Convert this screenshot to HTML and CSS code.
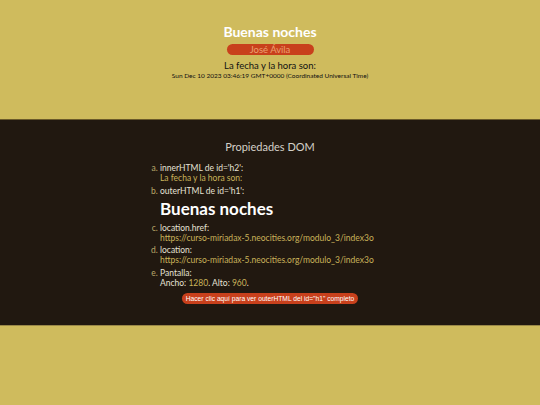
FILE: index.html
```html
<!DOCTYPE html>
<html lang="es">
<head>
<meta charset="utf-8">
<title>Propiedades DOM</title>
<link rel="stylesheet" href="styles.css">
</head>
<body>
<header class="top">
  <h1 class="title">Buenas noches</h1>
  <div class="name">José Ávila</div>
  <h2 class="when">La fecha y la hora son:</h2>
  <div class="date">Sun Dec 10 2023 03:46:19 GMT+0000 (Coordinated Universal Time)</div>
</header>
<section class="panel">
  <h3 class="panel-title">Propiedades DOM</h3>
  <ol class="props">
    <li><span class="key">innerHTML de id='h2':</span><span class="val">La fecha y la hora son:</span></li>
    <li><span class="key">outerHTML de id='h1':</span><span class="big">Buenas noches</span></li>
    <li><span class="key">location.href:</span><span class="val">https://curso-miriadax-5.neocities.org/modulo_3/index3o</span></li>
    <li><span class="key">location:</span><span class="val">https://curso-miriadax-5.neocities.org/modulo_3/index3o</span></li>
    <li><span class="key">Pantalla:</span><span class="plain">Ancho: <span class="num">1280</span>. Alto: <span class="num">960</span>.</span></li>
  </ol>
  <div class="actions"><button class="btn">Hacer clic aquí para ver outerHTML del id="h1" completo</button></div>
</section>
</body>
</html>
```
FILE: styles.css
```css
html, body {
  margin: 0;
  padding: 0;
  background: #cfbb5d;
  font-family: Lato, "Noto Sans", sans-serif;
}
.top {
  display: flex;
  flex-direction: column;
  align-items: center;
  padding-top: 22px;
  height: 97px;
  box-sizing: content-box;
}
.title {
  margin: 0;
  font-size: 14px;
  line-height: 19px;
  color: #fff;
  font-weight: 700;
}
.name {
  margin-top: 3px;
  width: 87px;
  height: 11px;
  line-height: 11px;
  border-radius: 6px;
  background: #c8401c;
  color: #eba070;
  font-size: 9.5px;
  text-align: center;
}
.when {
  margin: 6px 0 0;
  font-size: 9.5px;
  line-height: 10px;
  font-weight: 400;
  color: #111;
}
.date {
  margin-top: 1px;
  font-size: 6.5px;
  line-height: 7px;
  color: #111;
}
.panel {
  background: #211810;
  border-top: 1px solid #6b5a2a;
  border-bottom: 1px solid #9a8848;
  height: 207px;
  box-sizing: border-box;
  padding-top: 20px;
}
.panel-title {
  margin: 0;
  text-align: center;
  font-size: 11px;
  line-height: 14px;
  font-weight: 400;
  color: #d4d0c8;
}
.props {
  list-style: lower-alpha;
  margin: 9px 0 0;
  padding-left: 160px;
  font-size: 8.5px;
  line-height: 10px;
  color: #e6e2d6;
}
.props li {
  margin-bottom: 2.5px;
}
.props li::marker {
  color: #b9a86a;
}
.key, .val, .plain, .big {
  display: block;
}
.val {
  color: #c9b35a;
}
.num {
  color: #c9b35a;
}
.big {
  font-size: 17px;
  font-weight: 700;
  color: #fff;
  line-height: 22px;
  margin: 2px 0 3px;
}
.actions {
  display: flex;
  justify-content: center;
  margin-top: 5px;
}
.btn {
  background: #c8401c;
  color: #fff;
  border: none;
  border-radius: 6px;
  font-family: "Liberation Sans", Arial, sans-serif;
  font-size: 6.7px;
  height: 11px;
  padding: 0 4px;
  line-height: 11px;
}
```
